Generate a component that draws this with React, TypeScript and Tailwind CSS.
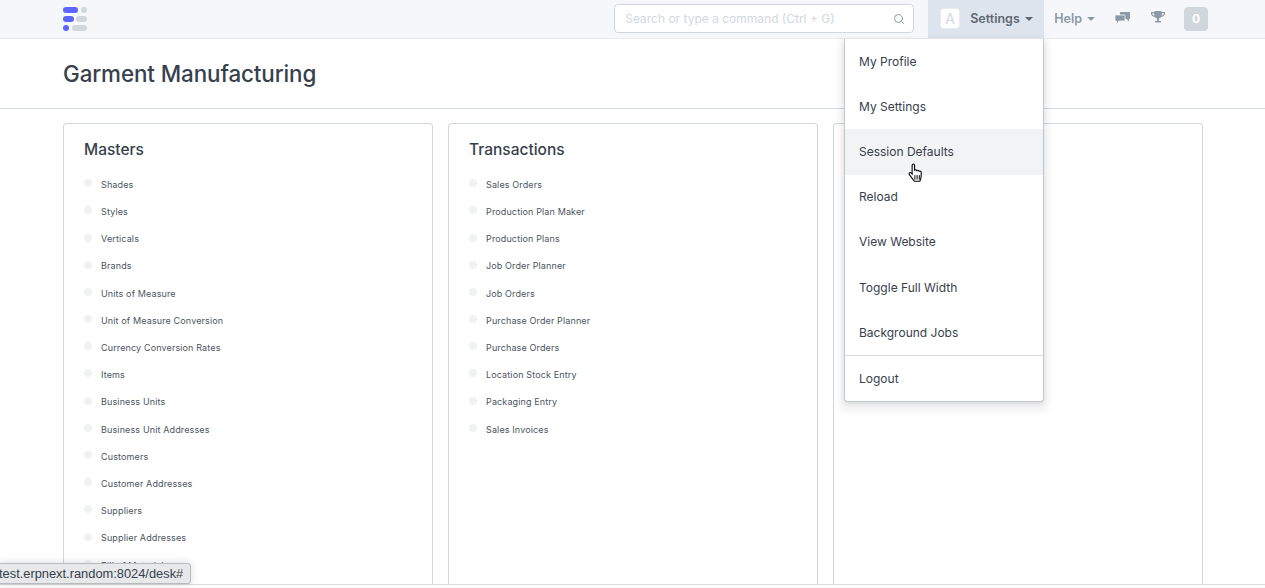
import { Search } from 'lucide-react';

const masters = [
  'Shades',
  'Styles',
  'Verticals',
  'Brands',
  'Units of Measure',
  'Unit of Measure Conversion',
  'Currency Conversion Rates',
  'Items',
  'Business Units',
  'Business Unit Addresses',
  'Customers',
  'Customer Addresses',
  'Suppliers',
  'Supplier Addresses',
  'Bill of Materials',
];

const transactions = [
  'Sales Orders',
  'Production Plan Maker',
  'Production Plans',
  'Job Order Planner',
  'Job Orders',
  'Purchase Order Planner',
  'Purchase Orders',
  'Location Stock Entry',
  'Packaging Entry',
  'Sales Invoices',
];

const menuItems = ['My Profile', 'My Settings', 'Session Defaults', 'Reload', 'View Website', 'Toggle Full Width', 'Background Jobs'];

function Logo() {
  return (
    <svg width="24" height="24" viewBox="0 0 24 24" className="block">
      <rect x="0" y="0" width="15" height="6" rx="3" fill="#5e64ff" />
      <rect x="18" y="0" width="6" height="6" rx="3" fill="#d1d8dd" />
      <rect x="0" y="9" width="11" height="6" rx="3" fill="#5e64ff" />
      <rect x="13" y="9" width="11" height="6" rx="3" fill="#d1d8dd" />
      <rect x="0" y="18" width="6" height="6" rx="3" fill="#5e64ff" />
      <rect x="9" y="18" width="15" height="6" rx="3" fill="#d1d8dd" />
    </svg>
  );
}

function LinkCard({ title, links }: { title: string; links: string[] }) {
  return (
    <section className="h-[461px] overflow-hidden rounded-t border border-b-0 border-[#d1d8dd] px-5 pt-[16px]">
      <h2 className="text-[15.5px] leading-[20px] font-medium text-[#36414c]">{title}</h2>
      <ul className="mt-[11.05px]">
        {links.map((link) => (
          <li key={link} className="flex h-[27.2px] items-center gap-[9px]">
            <span className="mb-[3px] h-2 w-2 shrink-0 rounded-full bg-[#f0f1f3]" />
            <span className="text-[9px] tracking-[0.13px] text-[#4a5561]">{link}</span>
          </li>
        ))}
      </ul>
    </section>
  );
}

function Cursor() {
  return (
    <svg width="18" height="21" viewBox="0 0 16 19" className="absolute top-[163px] left-[907px]">
      <path
        d="M4.500 2c0-1.400 2.200-1.400 2.200 0v5c0-1.200 2-1.200 2 0v.5c0-1.200 2-1.200 2 0v.5c0-1 2-1 2 .3v3.700c0 1.800-.6 3-1.200 4.500H6.500L2 10.500c-.9-1.200.5-2.400 1.500-1.500l1 1z"
        fill="#fff"
        stroke="#000"
        strokeWidth="1"
      />
      <path d="M7 11v4M9 11v4M11 11v4" stroke="#000" strokeWidth="0.9" />
    </svg>
  );
}

export default function App() {
  return (
    <div className="relative h-[588px] overflow-hidden bg-white font-['Inter','Liberation_Sans',sans-serif] text-[#36414c]">
      <nav className="flex h-[39px] items-center border-b border-[#e8ecf0] bg-[#f5f7fa] pl-[63px]">
        <Logo />
        <div className="ml-auto flex h-[38px] items-center">
          <label className="relative mr-[14px] mb-[2px] block w-[300px]">
            <input
              placeholder="Search or type a command (Ctrl + G)"
              className="h-[29px] w-full rounded border border-[#d1d8dd] bg-white pr-8 pl-[10px] text-[12px] outline-none placeholder:text-[#d1d8dd]"
            />
            <Search className="absolute top-[9px] right-[9px] h-3 w-3 text-[#8d99a6]" />
          </label>
          <div className="flex h-[38px] w-[116px] items-center bg-[#dee4ed] pl-3">
            <span className="mb-[1px] flex h-[21px] w-[20px] items-center justify-center rounded border border-[#e8ecf0] bg-white text-[14px] text-[#d1d8dd]">
              A
            </span>
            <span className="ml-[10px] text-[12.5px] font-semibold text-[#5f6973]">Settings</span>
            <span className="ml-[5px] h-0 w-0 border-x-[4px] border-t-[4px] border-x-transparent border-t-[#5f6973]" />
          </div>
          <div className="ml-[10px] flex items-center text-[12.5px] font-semibold text-[#8d99a6]">
            Help
            <span className="ml-[5px] h-0 w-0 border-x-[4px] border-t-[4px] border-x-transparent border-t-[#8d99a6]" />
          </div>
          <svg width="15" height="13" viewBox="0 0 15 13" className="mb-[1px] ml-[20px]" fill="#8d99a6">
            <path d="M5.500 0h9c.3 0 .5.200.5.500v6c0 .3-.2.500-.5.500H14v2.500L11.500 7H5V.5c0-.3.200-.5.500-.5z" />
            <path d="M.5 3h9c.3 0 .5.200.5.500v5c0 .3-.2.500-.5.500H4l-2.500 3.500V9h-1c-.3 0-.5-.2-.5-.5v-5c0-.3.200-.5.500-.5z" stroke="#f5f7fa" strokeWidth="0.8" />
          </svg>
          <svg width="14" height="13" viewBox="0 0 14 13" className="mb-[3px] ml-[21px]" fill="#8d99a6">
            <path d="M3.500 0h7v1H14v1.500c0 1.800-1.500 3.300-3.800 3.500-.6.800-1.300 1.300-2.200 1.500V10h2v1.500H4V10h2V7.500C5.100 7.300 4.400 6.800 3.800 6 1.500 5.800 0 4.300 0 2.500V1h3.500V0zM1.200 2.200v.3c0 1 .8 1.900 2.200 2.200-.2-.7-.3-1.500-.3-2.500H1.200zm11.600 0h-1.900c0 1-.1 1.800-.3 2.500 1.400-.3 2.200-1.200 2.200-2.200v-.3z" />
          </svg>
          <span className="mr-[57px] ml-[19px] flex h-6 w-6 items-center justify-center rounded bg-[#d1d8dd] text-[12px] font-bold text-white">
            0
          </span>
        </div>
      </nav>

      <header className="flex h-[70px] items-center border-b border-[#d1d8dd] pt-[1px] pl-[63px]">
        <h1 className="text-[22.4px] font-medium tracking-[-0.1px] text-[#36414c]">Garment Manufacturing</h1>
      </header>

      <main className="h-[476px] border-b border-[#d9dcdf] pt-[14px] pl-[63px]">
        <div className="grid w-[1140px] grid-cols-3 gap-[15px]">
          <LinkCard title="Masters" links={masters} />
          <LinkCard title="Transactions" links={transactions} />
          <section className="h-[461px] rounded-t border border-b-0 border-[#d1d8dd]" />
        </div>
      </main>

      <div className="absolute top-[39px] left-[844px] w-[200px] rounded-b border border-t-0 border-[#c4c9ce] bg-white shadow-[0_2px_4px_rgba(0,0,0,0.1),0_5px_6px_5px_rgba(0,0,0,0.05)]">
        {menuItems.map((item) => (
          <div
            key={item}
            className={`flex h-[45.2px] items-center px-[14px] text-[12px] text-[#36414c] ${item === 'Session Defaults' ? 'bg-[#f2f3f5]' : ''}`}
          >
            {item}
          </div>
        ))}
        <div className="border-t border-[#d8dcdf]" />
        <div className="flex h-[45px] items-center px-[14px] text-[12px] text-[#36414c]">Logout</div>
      </div>

      <Cursor />

      <div className="absolute top-[563px] -left-[2px] flex h-[21px] items-center rounded-r-[3px] border border-[#b9bcbf] bg-[#e6e8e9] pr-[7px] pl-0 font-['Liberation_Sans',sans-serif] text-[12.85px] text-[#36414c] shadow-[0_0_8px_rgba(0,0,0,0.15)]">
        test.erpnext.random:8024/desk#
      </div>
    </div>
  );
}
